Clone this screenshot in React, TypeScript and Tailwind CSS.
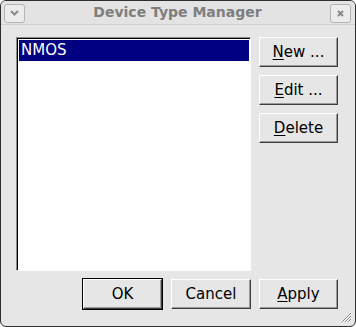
const font = { fontFamily: '"DejaVu Sans", Verdana, sans-serif' };

const Mnemonic = ({ label, index }: { label: string; index: number }) => (
  <span>
    {label.slice(0, index)}
    <span className="underline underline-offset-[2px] decoration-[1px]">{label[index]}</span>
    {label.slice(index + 1)}
  </span>
);

const Button = ({ children, wide = "w-[80px]" }: { children: React.ReactNode; wide?: string }) => (
  <button
    className={`${wide} h-[30px] bg-[#e6e6e6] border border-t-white border-l-white border-r-[#3c3c3c] border-b-[#3c3c3c] shadow-[inset_-1px_-1px_0_#9a9a9a] text-[15px] text-black flex items-center justify-center`}
  >
    {children}
  </button>
);

export default function App() {
  return (
    <div className="w-[356px] h-[327px] bg-white" style={font}>
      <div className="relative w-full h-full rounded-[6px] border border-[#2e2e2e] bg-[#e6e6e6] flex flex-col overflow-hidden">
        {/* title bar */}
        <div className="h-[24px] flex items-center px-[3px] bg-[#e3e3e3] border-b border-[#d0d0d0]">
          <div className="w-[21px] h-[19px] mt-[1px] rounded-[3px] border border-[#b4b4b4] bg-[#ececec] flex items-center justify-center">
            <svg width="9" height="6" viewBox="0 0 9 6">
              <path d="M1 1 L4.5 4.5 L8 1" stroke="#8a8a8a" strokeWidth="2" fill="none" />
            </svg>
          </div>
          <div className="flex-1 text-center text-[14px] font-bold text-[#7e7e7e]">Device Type Manager</div>
          <div className="w-[21px] h-[19px] mt-[1px] mr-[1px] rounded-[3px] border border-[#b4b4b4] bg-[#ececec] flex items-center justify-center">
            <svg width="7" height="7" viewBox="0 0 7 7">
              <path d="M1 1 L6 6 M6 1 L1 6" stroke="#8a8a8a" strokeWidth="2" />
            </svg>
          </div>
        </div>

        {/* body */}
        <div className="flex-1 flex flex-col pt-[12px] pl-[15px] pr-[17px]">
          <div className="flex gap-[8px]">
            <div className="w-[235px] h-[234px] bg-white border border-t-[#8a8a8a] border-l-[#8a8a8a] border-r-white border-b-white shadow-[inset_1px_1px_0_#000] pt-[2px] pl-[2px] pr-[1px]">
              <div className="h-[21px] bg-[#000080] text-white text-[15px] leading-[21px] pl-[2px]">NMOS</div>
            </div>
            <div className="flex flex-col gap-[8px]">
              <Button wide="w-[79px]">
                <Mnemonic label="New ..." index={0} />
              </Button>
              <Button wide="w-[79px]">
                <Mnemonic label="Edit ..." index={0} />
              </Button>
              <Button wide="w-[79px]">
                <Mnemonic label="Delete" index={0} />
              </Button>
            </div>
          </div>

          <div className="flex items-center justify-end gap-[8px] mt-[7px]">
            <div className="border border-black">
              <Button wide="w-[79px]">OK</Button>
            </div>
            <Button>Cancel</Button>
            <Button wide="w-[79px]">
              <Mnemonic label="Apply" index={0} />
            </Button>
          </div>
        </div>

        {/* resize grip */}
        <svg className="absolute right-[3px] bottom-[3px]" width="12" height="12" viewBox="0 0 12 12">
          <path d="M11 2 L2 11 M11 5 L5 11 M11 8 L8 11" stroke="#8a8a8a" strokeWidth="1" />
          <path d="M11 3 L3 11 M11 6 L6 11 M11 9 L9 11" stroke="#ffffff" strokeWidth="1" />
        </svg>
      </div>
    </div>
  );
}
